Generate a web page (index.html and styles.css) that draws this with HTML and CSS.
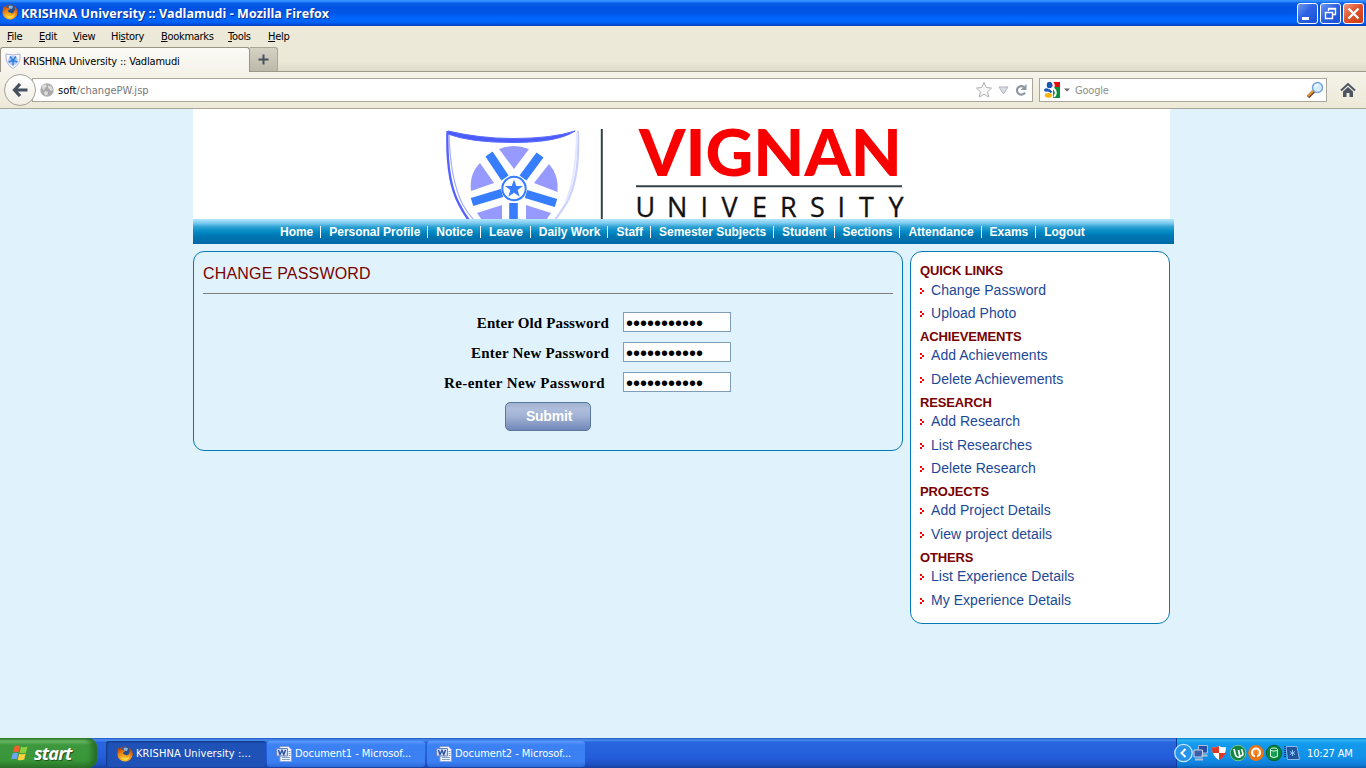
FILE: index.html
```html
<!DOCTYPE html>
<html lang="en">
<head>
<meta charset="utf-8">
<title>KRISHNA University :: Vadlamudi</title>
<link rel="stylesheet" href="styles.css">
</head>
<body>
<svg class="defs" width="0" height="0" aria-hidden="true">
  <defs>
    <radialGradient id="fox" cx=".45" cy=".85" r=".9"><stop offset="0" stop-color="#ffc928"/><stop offset=".5" stop-color="#f08a18"/><stop offset="1" stop-color="#b83a08"/></radialGradient>
    <symbol id="firefox" viewBox="0 0 16 16">
      <circle cx="8" cy="8" r="7.6" fill="url(#fox)"/>
      <path d="M4 3Q7-.5 11.500 1.500L13.500 4.500Q13 8 10 9.500L6 8 4.500 6Z" fill="#244f91"/>
      <path d="M6.500 2Q9 1 11 2.500L10 5 7 4.500Z" fill="#84b7e8"/>
      <path d="M.8 1.500 3 3.500 6.500 3.500 8 5.500 6 6.500 6.500 9Q9 11 11.500 9 13.500 6.500 12.500 2L15.500 7Q15.500 13 10 15 4 16 1 11Z" fill="url(#fox)"/>
      <path d="M3 9.500Q5 13 9 12.500 12 12 13 9 12 14.500 7.500 14 4 13 3 9.500Z" fill="#ffdf48"/>
    </symbol>
    <symbol id="word" viewBox="0 0 16 16">
      <path d="M4 .5h8.500l3 3v12H4Z" fill="#f4f7ff" stroke="#8fa3cc"/>
      <path d="M6 11.500h8M6 13.500h8M12.500 5.500h2M12.500 7.500h2M12.500 9.500h2" stroke="#86a0d2"/>
      <path d="M.5 2.500h11v7.500H.5Z" fill="#cfdcf7" stroke="#6b86c2"/>
      <path d="M2.500 4l1.500 4.500L6 4.500 7.800 8.500 9.500 4" fill="none" stroke="#2c509f" stroke-width="1.400"/>
    </symbol>
  </defs>
</svg>

<header class="titlebar">
  <svg class="title-icon" viewBox="0 0 16 16"><use href="#firefox"/></svg>
  <span class="title-text">KRISHNA University :: Vadlamudi - Mozilla Firefox</span>
  <div class="window-buttons">
    <svg class="wbtn" viewBox="0 0 19 19"><path d="M4 14.500h7" stroke="#fff" stroke-width="3"/></svg>
    <svg class="wbtn" viewBox="0 0 19 19"><path d="M7.500 7V4.500h7v6H12M7 5h8M4.500 8.500h7v6h-7ZM4 8.500h8" fill="none" stroke="#fff" stroke-width="1.400"/></svg>
    <svg class="wbtn wbtn-close" viewBox="0 0 19 19"><path d="m4.500 4.500 10 10M14.500 4.500l-10 10" stroke="#fff" stroke-width="2.300"/></svg>
  </div>
</header>

<nav class="menubar">
  <span><u>F</u>ile</span><span><u>E</u>dit</span><span><u>V</u>iew</span><span>Hi<u>s</u>tory</span><span><u>B</u>ookmarks</span><span><u>T</u>ools</span><span><u>H</u>elp</span>
</nav>

<div class="tabstrip">
  <div class="tab">
    <svg width="16" height="16" viewBox="0 0 16 16"><path d="M1 1Q8 3 15 1 16 11 8 15.500 0 11 1 1Z" fill="#f8f9ff" stroke="#a9b2d8"/><circle cx="8" cy="7.500" r="4.800" fill="#b4c8f5"/><path d="M5 3.500 8 7.500l3-4M3.500 9 8 7.500 12.500 9M8 7.500v5" stroke="#2f7fdc" stroke-width="1.500" fill="none"/></svg>
    <span>KRISHNA University :: Vadlamudi</span>
  </div>
  <div class="newtab"><svg width="11" height="11" viewBox="0 0 11 11"><path d="M5.500.5v10M.5 5.500h10" stroke="#47515f" stroke-width="2"/></svg></div>
</div>

<div class="toolbar">
  <div class="back"><svg width="16" height="14" viewBox="0 0 16 14"><path d="M8 1 2.500 7 8 13M3 7h12.500" fill="none" stroke="#46505f" stroke-width="3.200"/></svg></div>
  <div class="urlbar">
    <svg width="14" height="14" viewBox="0 0 14 14"><circle cx="7" cy="7" r="6.700" fill="#aaa"/><path d="M2 3Q4 1 6 1.500L7 3 5 5 4 7 2.500 6ZM8 2.500l3 .5 2 4-2 1-1.500-2L8 5ZM5 8l3 1-.5 3-2 .5L4 10Z" fill="#ddd"/></svg>
    <span class="url"><b>soft</b>/changePW.jsp</span>
    <svg class="url-tools" width="54" height="18" viewBox="0 0 54 18"><path d="m9 1.500 2.300 5 5.200.6-3.900 3.600 1.100 5.300L9 13.300 4.300 16l1.100-5.300L1.500 7.100l5.200-.6Z" fill="#f6f6f6" stroke="#b0b0b0"/><path d="M24 6h9l-4.500 7Z" fill="#d9dde4" stroke="#b0b5bd"/><path d="M49 6A4.300 4.300 0 1 0 50 11.500" fill="none" stroke="#8e98a3" stroke-width="2.200"/><path d="M51.500 3v6h-6Z" fill="#8e98a3"/></svg>
  </div>
  <div class="search">
    <svg width="16" height="16" viewBox="0 0 16 16"><path d="M8 0h8v5H8Z" fill="#e60a0a"/><path d="M9 5h7v11H9Z" fill="#078f3b"/><path d="M0 0h8.500v16H0Z" fill="#fff"/><path d="M8 0q3 3 1 6M9 6q5 4 1 9" stroke="#fff" stroke-width="2" fill="none"/><ellipse cx="5.500" cy="3" rx="2.800" ry="3.200" fill="#1756b8"/><ellipse cx="2.500" cy="8" rx="2.500" ry="1.800" fill="#1756b8"/><path d="M5.500 7l3 3-2 1-3-2Z" fill="#1756b8"/><ellipse cx="4.500" cy="13.300" rx="3.700" ry="2.400" fill="#f8b60b"/></svg>
    <svg class="caret" width="6" height="4" viewBox="0 0 6 4"><path d="M0 .5h6L3 3.500Z" fill="#666"/></svg>
    <span>Google</span>
    <svg class="lens" width="18" height="18" viewBox="0 0 18 18"><path d="m2 16 6-6" stroke="#6d4630" stroke-width="3.500"/><path d="m2 15 5.500-5.500" stroke="#ec9a3d" stroke-width="2"/><circle cx="11.500" cy="6.500" r="5" fill="#d5ecff" stroke="#77a5dc" stroke-width="1.500"/><path d="M9 6Q10 3.500 12 3.500" stroke="#fff" stroke-width="1.500" fill="none"/></svg>
  </div>
  <svg class="home" width="16" height="16" viewBox="0 0 16 16"><path d="M1 8.500 8 2l7 6.500" fill="none" stroke="#4c5561" stroke-width="2"/><path d="m3 9.500 5-4.600 5 4.600V15H9.500v-4h-3v4H3Z" fill="#4c5561"/></svg>
</div>

<main class="page">
  <div class="banner">
    <svg width="977" height="110" viewBox="193 109 977 110">
      <defs><clipPath id="crop"><path d="M193 109h977v110H193Z"/></clipPath></defs>
      <g clip-path="url(#crop)">
        <path d="M447.500 131Q446 180 459 204 467 220 479 232" fill="none" stroke="#5362ff" stroke-width="2.400"/>
        <path d="M449 132Q450 180 463 205 470 217 478 224" fill="none" stroke="#a5adff" stroke-width="1.200"/>
        <path d="M578 131Q580 178 567 202 560 214 548 229" fill="none" stroke="#cbd0ff" stroke-width="2.200"/>
        <path d="M577 133Q576 178 566 201" fill="none" stroke="#e5e8ff" stroke-width="2"/>
        <path d="M448 131Q480 138.500 513 138.500 552 138.500 575 131 558 142.500 513 142.500 470 142.500 448 134Z" fill="#4b5cff" stroke="#5968ff"/>
        <g fill="#969aff">
          <path d="M499 149Q513 143 529 149L514 169Z"/>
          <path d="M480 163 494 183 471 191Q469 174 480 163Z"/>
          <path d="M549 164 534 183 557.500 192Q559 175 549 164Z"/>
          <path d="M477 213 502 205V223H484Z"/>
          <path d="M526 205 551 213 544 223H526Z"/>
        </g>
        <path d="m489 154 16 24M540 155l-17 23M472 202l30-9M556 203l-30-9M513.500 203v22" stroke="#367eff" stroke-width="8.600" fill="none"/>
        <circle cx="514" cy="188.500" r="11.700" fill="#fff" stroke="#367eff" stroke-width="2"/>
        <path d="m514 179.500 2.300 6.500h6.700l-5.300 4 2 6.800-5.700-4-5.700 4 2-6.800-5.300-4h6.700Z" fill="#367eff"/>
        <path d="M601.800 129v90" stroke="#344147" stroke-width="2"/>
      </g>
      <text class="logo-name" x="639" y="176" textLength="263" lengthAdjust="spacingAndGlyphs">VIGNAN</text>
      <path d="M636 186.300h266" stroke="#344147" stroke-width="2"/>
      <g class="logo-sub"><text x="635.500" y="216.500">U</text><text x="667" y="216.500">N</text><text x="700.500" y="216.500">I</text><text x="721.500" y="216.500">V</text><text x="752" y="216.500">E</text><text x="780" y="216.500">R</text><text x="810" y="216.500">S</text><text x="837.500" y="216.500">I</text><text x="859" y="216.500">T</text><text x="888.500" y="216.500">Y</text></g>
    </svg>
  </div>
  <nav class="mainnav">
    <a>Home</a><a>Personal Profile</a><a>Notice</a><a>Leave</a><a>Daily Work</a><a>Staff</a><a>Semester Subjects</a><a>Student</a><a>Sections</a><a>Attendance</a><a>Exams</a><a>Logout</a>
  </nav>
  <div class="columns">
    <section class="panel">
      <h1>CHANGE PASSWORD</h1>
      <form>
        <div class="field"><label>Enter Old Password</label><input type="password" value="abcdefghijk"></div>
        <div class="field field-mid"><label>Enter New Password</label><input type="password" value="abcdefghijk"></div>
        <div class="field field-long"><label>Re-enter New Password</label><input type="password" value="abcdefghijk"></div>
        <button type="button" class="submit">Submit</button>
      </form>
    </section>
    <aside class="sidebar">
      <h2>QUICK LINKS</h2>
      <a>Change Password</a><a>Upload Photo</a>
      <h2>ACHIEVEMENTS</h2>
      <a>Add Achievements</a><a>Delete Achievements</a>
      <h2>RESEARCH</h2>
      <a>Add Research</a><a>List Researches</a><a>Delete Research</a>
      <h2>PROJECTS</h2>
      <a>Add Project Details</a><a>View project details</a>
      <h2>OTHERS</h2>
      <a>List Experience Details</a><a>My Experience Details</a>
    </aside>
  </div>
</main>

<footer class="taskbar">
  <div class="start">
    <svg width="18" height="18" viewBox="0 0 18 18"><path d="M3.500 2.500Q6 .8 9 2.200L7.500 8.300Q4.500 7 2 8.500Z" fill="#f3602c"/><path d="M10 2.600Q13 4 16.500 2.500L15 8.500Q11.500 10 8.500 8.700Z" fill="#8bd13c"/><path d="M1.700 9.500Q4.500 8 7.300 9.300L5.700 15.300Q3 14 .2 15.500Z" fill="#6da4f4"/><path d="M8.200 9.700Q11.500 11 14.700 9.500L13.200 15.500Q10 17 6.700 15.700Z" fill="#ffd23d"/></svg>
    <span>start</span>
  </div>
  <div class="task task-active"><svg width="16" height="16"><use href="#firefox"/></svg><span>KRISHNA University :...</span></div>
  <div class="task"><svg width="16" height="16"><use href="#word"/></svg><span>Document1 - Microsof...</span></div>
  <div class="task"><svg width="16" height="16"><use href="#word"/></svg><span>Document2 - Microsof...</span></div>
  <div class="tray">
    <svg class="tray-icons" width="128" height="20" viewBox="0 0 128 20">
      <circle cx="9.500" cy="10" r="8.700" fill="#2793e9" stroke="#c5e4fb" stroke-width="1.300"/><path d="m11.500 6-4 4 4 4" fill="none" stroke="#fff" stroke-width="2"/>
      <path d="M24.500 2.500h9v7.500h-9Z" fill="#284fa3" stroke="#aebbe0"/><path d="M20 7h8.500v7H20Z" fill="#3d5fa8" stroke="#c8d2ea"/><path d="M21 16.500h8M27.500 12.500h6" stroke="#b5bfd2" stroke-width="2"/>
      <path d="M38 4q4 1 7-1 3 2 7 1 0 9-7 13-7-4-7-13Z" fill="#fff"/><path d="M38 4q4 1 7-1v7h-6.500Q38 7 38 4ZM45 10h6.500q-1.500 4.500-6.500 7Z" fill="#dc3929"/>
      <circle cx="64" cy="10" r="7.800" fill="#128344" stroke="#73c696"/><path d="m60 6 1.500 6q1 3 4.500 2l-1.500-7M66 13q4 0 2.500-4L67.500 6" stroke="#fff" stroke-width="1.700" fill="none"/>
      <circle cx="82" cy="10" r="7.900" fill="#ed7411"/><circle cx="82" cy="9.500" r="4" fill="#f58a24" stroke="#fff" stroke-width="2.200"/><path d="M82 10v5" stroke="#ed7411" stroke-width="2"/>
      <circle cx="100" cy="10" r="7.700" fill="#08853f" stroke="#005f2b"/><path d="M96.500 6.500v7q3.500 2 7 0v-7" fill="#18a052" stroke="#d8ffe4"/><ellipse cx="100" cy="6.500" rx="3.500" ry="1.500" fill="#0b783b" stroke="#d8ffe4"/>
      <path d="M112 3.500h11l2.500 13h-12Z" fill="#21549e" stroke="#89b8e9"/><path d="M111 3v12" stroke="#1d3979" stroke-width="2" stroke-dasharray="1 1"/><path d="M118.500 7v6M116 8.500l5 3M121 8.500l-5 3" stroke="#8cc5f4"/>
    </svg>
    <span class="clock">10:27 AM</span>
  </div>
</footer>
</body>
</html>
```

FILE: styles.css
```css
* { box-sizing: border-box; }
body {
  margin: 0;
  width: 1366px;
  height: 768px;
  overflow: hidden;
  display: flex;
  flex-direction: column;
  background: #e0f3fd;
  font: 11px "DejaVu Sans Condensed", "DejaVu Sans", sans-serif;
  color: #000;
}
svg { display: block; flex: none; }
span { white-space: nowrap; }
.defs { position: absolute; }

.titlebar {
  flex: none;
  height: 26px;
  display: flex;
  align-items: center;
  padding-left: 2px;
  background: linear-gradient(#2e8bff 0, #3a94ff 1px, #0a60ea 3px, #0053e1 7px, #0056e6 13px, #0066fd 18px, #0064f8 22px, #0049d5 25px, #0036b0);
}
.title-icon { width: 16px; height: 16px; margin: 0 3px 2px 0; }
.title-text {
  font: bold 12.5px "Open Sans", sans-serif;
  letter-spacing: .04px;
  color: #fff;
  text-shadow: 1px 1px 0 #0c2f8c;
}
.window-buttons { margin-left: auto; display: flex; gap: 2px; padding-right: 2px; }
.wbtn {
  width: 21px;
  height: 21px;
  border: 1px solid #fff;
  border-radius: 3px;
  background: linear-gradient(135deg, #7198ee, #2e62e4 45%, #1750d7);
}
.wbtn-close { background: linear-gradient(135deg, #ef9c7f, #e0532e 45%, #c83c12); }

.menubar {
  flex: none;
  height: 21px;
  display: grid;
  grid-template-columns: 32px 34px 38px 50px 67px 40px 50px;
  align-items: center;
  padding-left: 7px;
  background: #ece9d8;
}
.menubar span { letter-spacing: -.3px; }
.menubar u { text-underline-offset: 1px; }

.tabstrip {
  flex: none;
  height: 25px;
  display: flex;
  background: linear-gradient(#ece9d8 0, #ebe8d7 14px, #dfdbcb 24px);
  border-bottom: 1px solid #9d9888;
}
.tab {
  width: 250px;
  height: 25px;
  display: flex;
  align-items: center;
  gap: 2px;
  padding: 2px 0 0 4px;
  border: 1px solid #989383;
  border-bottom: 0;
  border-radius: 3px 3px 0 0;
  background: linear-gradient(#fbfaf6, #f5f3ea);
}
.tab span { letter-spacing: -.18px; }
.newtab {
  width: 28px;
  height: 24px;
  display: grid;
  place-items: center;
  border: 1px solid #aaa594;
  border-left: 0;
  border-bottom: 0;
  border-radius: 0 3px 0 0;
  background: linear-gradient(#d5d1c3, #bdb9aa);
}

.toolbar {
  flex: none;
  height: 37px;
  display: flex;
  align-items: center;
  padding: 0 10px 0 4px;
  background: linear-gradient(#f5f3ea, #ece9d8);
  border-bottom: 1px solid #aca899;
}
.back {
  z-index: 1;
  width: 32px;
  height: 32px;
  display: grid;
  place-items: center;
  border: 1px solid #a5a195;
  border-radius: 50%;
  background: linear-gradient(#fff, #efede3);
}
.urlbar {
  width: 1001px;
  height: 24px;
  margin-left: -4px;
  display: flex;
  align-items: center;
  padding: 0 3px 0 7px;
  border: 1px solid #aaa69a;
  background: #fff;
}
.url { margin-left: 4px; padding-top: 1px; color: #777; letter-spacing: .04px; }
.url b { color: #000; font-weight: normal; }
.url-tools { margin-left: auto; }
.search {
  width: 288px;
  height: 24px;
  margin-left: 6px;
  display: flex;
  align-items: center;
  padding: 0 2px 0 4px;
  border: 1px solid #aaa69a;
  background: #fff;
  color: #8f8f88;
}
.search span { padding-top: 1px; letter-spacing: -.2px; }
.caret { margin: 0 5px 0 4px; }
.lens { margin-left: auto; }
.home { margin-left: auto; }

.page {
  flex: 1;
  width: 981px;
  margin-left: 193px;
  font-family: "Liberation Sans", Arial, sans-serif;
}
.banner { width: 977px; height: 110px; background: #fff; }
.banner svg { overflow: visible; }
.logo-name { font: 900 65px Lato, sans-serif; fill: #f90000; }
.logo-sub { font: 27px "Open Sans", sans-serif; fill: #111; stroke: #111; stroke-width: .3px; }

.mainnav {
  height: 25px;
  display: flex;
  padding: 7px 0 0 87px;
  background: linear-gradient(#b5e6ff, #7dccf1 4px, #2ca0d2 8px, #0089c4 13px, #0077b2 17px, #0068a6);
  color: #fff;
  font-size: 12px;
  font-weight: bold;
  line-height: 12px;
  letter-spacing: -.02px;
}
.mainnav a { height: 12px; white-space: nowrap; padding-right: 7px; margin-right: 8px; border-right: 1px solid #fff; }
.mainnav a:last-child { border: 0; }

.columns { display: flex; align-items: flex-start; gap: 7px; padding-top: 7px; }
.panel {
  width: 710px;
  height: 200px;
  padding: 9px;
  border: 1px solid #0579b3;
  border-radius: 11px;
}
h1 {
  height: 33px;
  margin: 0;
  border-bottom: 1px solid #808080;
  color: #7a0000;
  font-weight: normal;
  font-size: 16px;
  line-height: 25px;
  letter-spacing: .18px;
}
form { padding-top: 18px; }
.field {
  height: 30px;
  display: grid;
  grid-template-columns: 406px 108px;
  column-gap: 14px;
}
.field label {
  text-align: right;
  font: bold 15px/22px "Liberation Serif", "Times New Roman", serif;
  letter-spacing: .14px;
}
.field-mid label { letter-spacing: .23px; }
.field-long { grid-template-columns: 402px 108px; column-gap: 18px; }
.field-long label { letter-spacing: .38px; }
.field input {
  width: 108px;
  height: 20px;
  padding: 2px 2px 0;
  border: 1px solid #7f9db9;
  background: #fff;
  font: 20px/16px "Liberation Sans", Arial, sans-serif;
}
.submit {
  display: block;
  width: 86px;
  height: 29px;
  margin-left: 302px;
  padding: 0 0 2px 2px;
  border: 1px solid #5a789d;
  border-radius: 5px;
  background: linear-gradient(#9fb1d1, #afbddb 6px, #a2b3d5 13px, #7288b8);
  color: #fff;
  font: bold 14px "Liberation Sans", Arial, sans-serif;
  letter-spacing: -.2px;
}
.sidebar {
  width: 260px;
  height: 373px;
  padding: 10px 9px;
  border: 1px solid #0579b3;
  border-radius: 12px;
  background: #fff;
}
.sidebar h2 { margin: 0; color: #7a0000; font-size: 13px; line-height: 18.75px; letter-spacing: -.14px; }
.sidebar a {
  display: flex;
  align-items: center;
  height: 18.75px;
  margin-bottom: 4.75px;
  padding-bottom: 1px;
  color: #1c4898;
  font-size: 14px;
  letter-spacing: .04px;
}
.sidebar a::before {
  content: "";
  width: 2px;
  height: 2px;
  margin: 0 9px 0 0;
  background: #f00;
  transform: translate(2px, 1px);
  box-shadow: -2px -2px #f00, -2px 2px #f00;
}

.taskbar {
  flex: none;
  height: 30px;
  display: flex;
  align-items: center;
  background: linear-gradient(#1f54bf, #4b8ff2 2px, #2867df 4px, #245cda 20px, #1d4fc0 27px, #173f9d);
  color: #fff;
}
.start {
  width: 97px;
  height: 30px;
  margin-right: 9px;
  display: flex;
  align-items: center;
  gap: 5px;
  padding-left: 11px;
  border-radius: 0 9px 9px 0;
  background: linear-gradient(#2f7d2f, #6dbd6b 3px, #3d973d 7px, #399739 22px, #2a742a);
  box-shadow: inset -5px 0 5px #276f28;
}
.start span { font: italic bold 18px/22px "Open Sans", sans-serif; letter-spacing: -.8px; text-shadow: 1px 1px 1px #234c1d; }
.task {
  width: 158px;
  height: 26px;
  margin: 1px 2px 0 0;
  display: flex;
  align-items: center;
  gap: 3px;
  padding-left: 9px;
  border-radius: 3px;
  background: linear-gradient(#5b99fb, #3c81f3 4px, #3b80f2 21px, #2d69da);
}
.task-active { width: 160px; margin-right: 1px; padding-left: 11px; background: #1e52b7; box-shadow: inset 1px 1px 2px #143780; }
.task span { letter-spacing: -.05px; }
.task-active span { letter-spacing: .08px; }
.tray {
  width: 190px;
  height: 30px;
  margin-left: auto;
  display: flex;
  align-items: center;
  border-left: 1px solid #0a3e9d;
  background: linear-gradient(#0d76c7, #2db7f3 2px, #129bec 5px, #1190e8 20px, #0d7bd6 27px, #0c5dad);
}
.tray-icons { margin-left: -3px; }
.clock { margin-left: 5px; letter-spacing: -.15px; }
```
